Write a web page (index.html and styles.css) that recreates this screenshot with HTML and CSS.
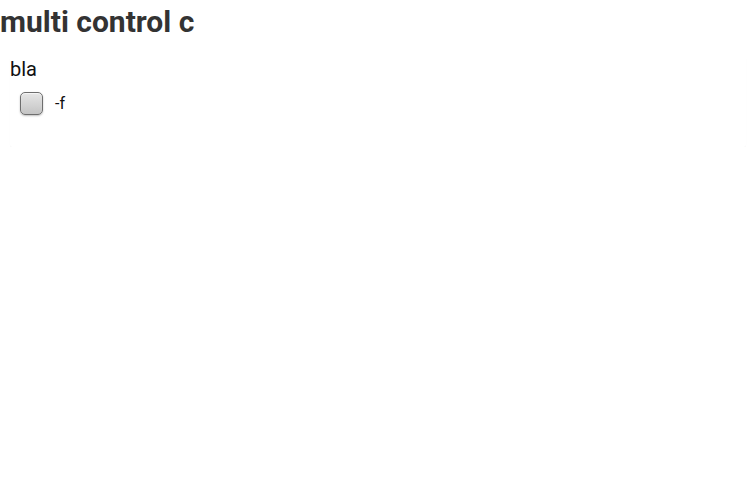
FILE: index.html
```html
<!DOCTYPE html>
<html>
<head>
<meta charset="utf-8">
<link rel="stylesheet" href="styles.css">
</head>
<body>
<h1 class="title">multi control c</h1>
<div class="card">
  <div class="group-label">bla</div>
  <label class="option">
    <span class="check"></span>
    <span class="option-text">-f</span>
  </label>
</div>
</body>
</html>
```
FILE: styles.css
```css
html, body {
  margin: 0;
  padding: 0;
  background: #fff;
}
.title {
  margin: 0;
  padding-top: 4px;
  font-family: Roboto, "Liberation Sans", sans-serif;
  font-weight: 700;
  font-size: 30px;
  line-height: 36px;
  color: #333;
}
.card {
  margin: 17px 10px 0 10px;
  height: 90px;
  display: flex;
  flex-direction: column;
  box-shadow: 0 1px 1px rgba(0,0,0,0.04);
  border-radius: 0 0 3px 3px;
}
.group-label {
  font-family: Roboto, "Open Sans", sans-serif;
  font-size: 20px;
  line-height: 24px;
  color: #111;
}
.option {
  display: flex;
  align-items: center;
  gap: 12px;
  margin-top: 11px;
  margin-left: 10px;
}
.check {
  width: 21px;
  height: 21px;
  border: 1px solid #6e6e6e;
  border-radius: 5px;
  background: linear-gradient(#e6e6e6, #c4c4c4);
  box-shadow: inset 0 1px 1px rgba(255,255,255,0.7), 0 1px 2px rgba(0,0,0,0.25);
}
.option-text {
  font-family: Roboto, "Open Sans", sans-serif;
  font-size: 16px;
  color: #111;
}
```
